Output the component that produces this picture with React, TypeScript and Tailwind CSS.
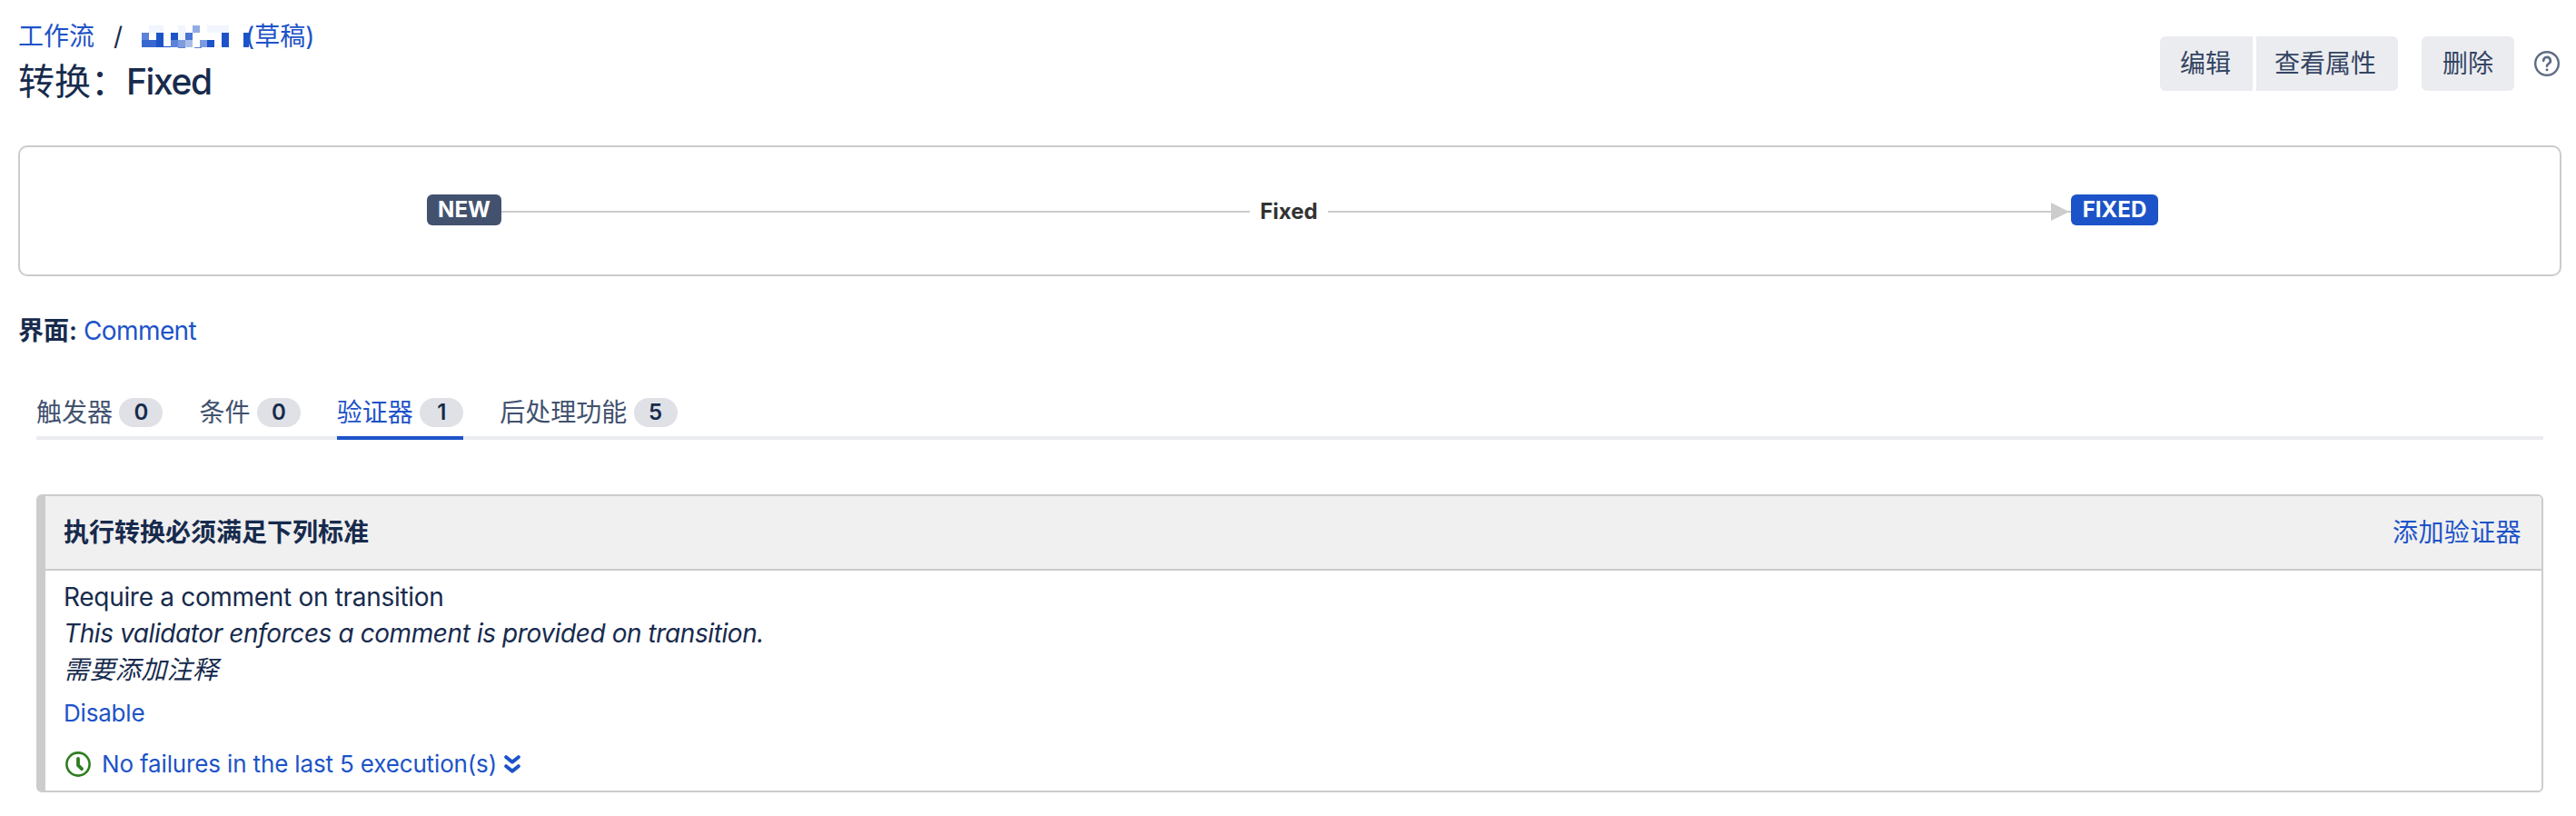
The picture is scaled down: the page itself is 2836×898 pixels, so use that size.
import React from "react";

const link = "text-[#1d53c8]";

function Tab({ label, count, active }: { label: string; count: number; active?: boolean }) {
  return (
    <div className={`flex h-[58px] border-b-4 ${active ? "border-[#1d53c8] text-[#1d53c8]" : "border-transparent text-[#42526e]"}`}>
      <span className="h-[56px] leading-[56px]">{label}</span>
      <span className="mt-[12px] ml-[7.4px] flex h-[32px] w-[48px] items-center justify-center rounded-full bg-[#dfe1e6] text-[24px] font-semibold text-[#172b4d]">
        {count}
      </span>
    </div>
  );
}

const mosaic: [number, number, number, number, string][] = [
  [8, 0, 16, 8, "#f1f5fd"],
  [40, 0, 8, 8, "#f1f5fd"],
  [56, 0, 8, 8, "#91abe5"],
  [72, 0, 24, 8, "#f1f5fd"],
  [0, 8, 8, 8, "#5b82d8"],
  [16, 8, 8, 16, "#1d53c8"],
  [32, 8, 8, 8, "#1d53c8"],
  [40, 8, 8, 8, "#f1f5fd"],
  [48, 8, 8, 8, "#4a75d3"],
  [88, 8, 8, 16, "#1d53c8"],
  [112, 8, 6, 16, "#1d53c8"],
  [0, 16, 16, 8, "#3767cf"],
  [32, 16, 8, 8, "#5b82d8"],
  [40, 16, 8, 8, "#7e9be0"],
  [48, 16, 8, 8, "#a9bdea"],
  [64, 16, 8, 8, "#7e9be0"],
  [72, 16, 8, 8, "#1d53c8"],
  [24, 23, 8, 1, "#1d53c8"],
  [40, 24, 8, 1, "#5b82d8"],
  [58, 24, 8, 1, "#5b82d8"],
];

export default function App() {
  return (
    <div className="h-[898px] w-[2836px] overflow-hidden bg-white pr-[16px] pl-[20px] font-['Inter','Noto_Sans_CJK_SC',sans-serif] text-[28px] whitespace-nowrap text-[#172b4d]">
      <header className="flex h-[160px] justify-between">
        <div>
          <div className="mt-[20px] flex h-[40px] items-center leading-[40px]">
            <a className={link}>工作流</a>
            <span className="ml-[21px] w-[11px]">/</span>
            <svg className="ml-[20px] h-[25px] w-[118px] shrink-0" viewBox="0 0 118 25" shapeRendering="crispEdges">
              {mosaic.map(([x, y, w, h, c], i) => (
                <rect key={i} x={x} y={y} width={w} height={h} fill={c} />
              ))}
            </svg>
            <a className={`-ml-[4px] ${link}`}>(草稿)</a>
          </div>
          <h1 className="mt-[2px] flex h-[56px] items-center leading-[56px]">
            <span className="w-[119px] shrink-0 text-[40px] font-normal">转换：</span>
            <span className="text-[39px] font-medium tracking-[-1.4px]">Fixed</span>
          </h1>
        </div>
        <div className="mt-[40px] flex h-[60px] items-center text-[#344563]">
          <button className="h-[60px] w-[102px] rounded-l-[6px] bg-[#ebecf0] pr-[2px]">编辑</button>
          <button className="ml-[4px] h-[60px] w-[156px] rounded-r-[6px] bg-[#ebecf0] pr-[4px]">查看属性</button>
          <button className="ml-[26px] h-[60px] w-[102px] rounded-[6px] bg-[#ebecf0]">删除</button>
          <svg className="mr-[2px] ml-[22px] h-[28px] w-[28px]" viewBox="0 0 28 28" fill="none" stroke="#5e6c84">
            <circle cx="14" cy="14" r="12.8" strokeWidth="2.4" />
            <path d="M10.2 10.8a3.8 3.8 0 1 1 5.6 3.3c-1.2.7-1.8 1.1-1.8 2.6" strokeWidth="2.7" strokeLinecap="round" />
            <circle cx="14" cy="20.8" r="1.5" fill="#5e6c84" stroke="none" />
          </svg>
        </div>
      </header>

      <section className="flex h-[144px] w-[2800px] items-center rounded-[10px] border-2 border-[#ccc] pl-[448px] text-[24px] font-bold">
        <span className="-mt-[2px] flex h-[34px] w-[82px] items-center justify-center rounded-[6px] bg-[#42526e] text-white">NEW</span>
        <span className="mt-[2px] h-[2px] w-[824px] bg-[#ccc]" />
        <span className="mt-[2px] w-[86px] text-center text-[#333]">Fixed</span>
        <span className="mt-[2px] h-[2px] w-[796px] bg-[#ccc]" />
        <svg className="mt-[2px] h-[20px] w-[22px]" viewBox="0 0 22 20">
          <path d="M0 0L20 10L0 20Z M16 9H22V11H16Z" fill="#ccc" />
        </svg>
        <span className="-mt-[2px] flex h-[34px] w-[96px] items-center justify-center rounded-[6px] bg-[#1d53c8] text-white">FIXED</span>
      </section>

      <div className="mt-[40px] flex h-[40px] items-center leading-[40px]">
        <span className="w-[72px] shrink-0 font-semibold">界面:</span>
        <a className={`tracking-[-0.6px] ${link}`}>Comment</a>
      </div>

      <nav className="mx-[20px] mt-[42px] flex h-[58px] gap-[40px] shadow-[inset_0_-4px_0_#ebecf0]">
        <Tab label="触发器" count={0} />
        <Tab label="条件" count={0} />
        <Tab label="验证器" count={1} active />
        <Tab label="后处理功能" count={5} />
      </nav>

      <section className="mx-[20px] mt-[60px] h-[328px] overflow-hidden rounded-[6px] border-2 border-l-[10px] border-[#ccc]">
        <div className="flex h-[82px] items-center justify-between border-b-2 border-[#ccc] bg-[#f0f0f0] pr-[22px] pl-[20px]">
          <h2 className="font-bold">执行转换必须满足下列标准</h2>
          <a className={`tracking-[0.4px] ${link}`}>添加验证器</a>
        </div>
        <div className="pt-[9px] pl-[20px] leading-[40px]">
          <p className="tracking-[-0.31px]">Require a comment on transition</p>
          <p className="tracking-[-0.42px] italic">This validator enforces a comment is provided on transition.</p>
          <p className="tracking-[0.4px] italic">需要添加注释</p>
          <p className={`mt-[8px] text-[26px] tracking-[-0.2px] ${link}`}>Disable</p>
          <div className={`mt-[16px] flex h-[40px] items-center text-[26px] ${link}`}>
            <svg className="ml-[2px] h-[28px] w-[28px] shrink-0" viewBox="0 0 28 28" fill="none" stroke="#2f7d1f" strokeLinecap="round" strokeLinejoin="round">
              <circle cx="14" cy="14" r="12.6" strokeWidth="2.6" />
              <path d="M14 8v7.2l4 4" strokeWidth="3.8" />
            </svg>
            <span className="ml-[12px] w-[443px] tracking-[-0.15px]">No failures in the last 5 execution(s)</span>
            <svg className="h-[20px] w-[18px] shrink-0" viewBox="0 0 18 20" fill="none" stroke="#1d53c8" strokeWidth="4" strokeLinecap="round" strokeLinejoin="round">
              <path d="M2.2 2.2L9 7.6L15.8 2.2M2.2 12.2L9 17.6L15.8 12.2" />
            </svg>
          </div>
        </div>
      </section>
    </div>
  );
}
